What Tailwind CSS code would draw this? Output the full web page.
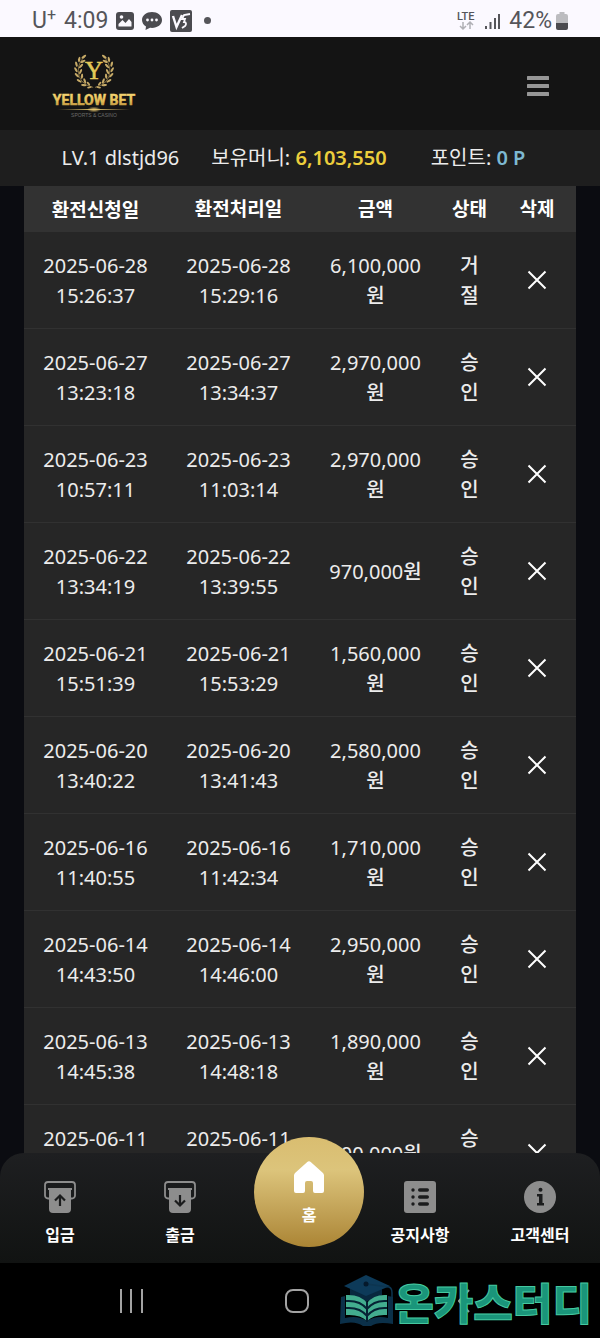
<!DOCTYPE html>
<html lang="ko">
<head>
  <meta charset="UTF-8">
  <meta name="viewport" content="width=device-width, initial-scale=1.0">
  <title>YELLOW BET</title>
  <script src="https://cdn.jsdelivr.net/npm/@tailwindcss/browser@4"></script>
</head>
<body class="h-screen flex flex-col overflow-hidden bg-[#0b0c11] text-[#ececec] font-['Noto_Sans','Noto_Sans_CJK_KR',sans-serif]">

  <!-- 상태 표시줄 -->
  <div class="h-[37px] shrink-0 flex items-center justify-between px-8 pt-1 bg-[#fbf9ff] text-[#55555a] font-['Roboto','Noto_Sans_CJK_KR',sans-serif] text-[23px] leading-8">
    <div class="flex items-center gap-2">
      <span>U<sup class="text-base">+</sup></span>
      <span>4:09</span>
      <svg class="w-[18px] h-[18px]" viewBox="0 0 18 18">
        <rect width="18" height="18" rx="3" fill="#4b4b50"/>
        <path d="M2.500 14.500V12l4-4 3 3 3.500-4 2.500 3v4.500z" fill="#fbf9ff"/>
        <circle cx="5.500" cy="5" r="1.800" fill="#fbf9ff"/>
      </svg>
      <svg class="w-5 h-5" viewBox="0 0 20 20">
        <path d="M10 1C4.500 1 0 4.500 0 9c0 2.500 1.500 5 4 6.500L3.500 19l4.500-2.200c6.500.9 12-2.800 12-7.800 0-4.500-4.500-8-10-8z" fill="#4b4b50"/>
        <circle cx="5.500" cy="9" r="1.400" fill="#fbf9ff"/><circle cx="10" cy="9" r="1.400" fill="#fbf9ff"/><circle cx="14.500" cy="9" r="1.400" fill="#fbf9ff"/>
      </svg>
      <svg class="w-[22px] h-[22px]" viewBox="0 0 22 22">
        <rect width="22" height="22" rx="2" fill="#4b4b50"/>
        <path d="M3 6l3.500 11L12 5" fill="none" stroke="#fbf9ff" stroke-width="2.400"/>
        <path d="M20 4l-6 1-2 4h3l-1 3c2.500 0 2.500 2.500 1 4l-3 2" fill="none" stroke="#fbf9ff" stroke-width="1.800"/>
      </svg>
      <span class="ml-1 w-[7px] h-[7px] rounded-full bg-[#55555a]"></span>
    </div>
    <div class="flex items-center gap-1">
      <svg class="w-5 h-5" viewBox="0 0 20 20">
        <text x="0" y="9" font-size="11" font-weight="500" fill="#55555a">LTE</text>
        <path d="M6 11v7M3 15l3 3 3-3M13 18v-7M10 14l3-3 3 3" fill="none" stroke="#b0b0b5" stroke-width="1.500"/>
      </svg>
      <svg class="w-4 h-4 ml-1" viewBox="0 0 16 16" fill="#55555a">
        <rect x="0" y="13" width="2" height="3"/><rect x="4.500" y="9" width="2" height="7"/><rect x="9" y="5" width="2" height="11"/><rect x="13" y="1" width="2" height="15"/>
      </svg>
      <span class="ml-1">42%</span>
      <svg class="w-3 h-[18px]" viewBox="0 0 12 18">
        <path d="M3.500 0h5v2H10q2 0 2 2v7H0V4q0-2 2-2h1.500z" fill="#bcbcc0"/>
        <path d="M0 11h12v5q0 2-2 2H2q-2 0-2-2z" fill="#4b4b50"/>
      </svg>
    </div>
  </div>

  <!-- 헤더 -->
  <header class="h-[93px] shrink-0 flex items-center justify-between pl-[52px] pr-[35px] pt-1 bg-[#141414]">
    <a href="/" aria-label="YELLOW BET">
      <svg class="w-[84px] h-[68px]" viewBox="0 0 84 68">
        <defs>
          <linearGradient id="gold" x1="0" y1="0" x2="0" y2="1">
            <stop offset="0" stop-color="#f6d878"/><stop offset="0.500" stop-color="#e9c35c"/><stop offset="1" stop-color="#b58a38"/>
          </linearGradient>
          <radialGradient id="glow"><stop offset="0" stop-color="#e8c870"/><stop offset="1" stop-color="#e8c870" stop-opacity="0"/></radialGradient>
          <g id="laurel" fill="#c6aa67">
            <path d="M41 37Q25 33 25 19 25 10 32 4" fill="none" stroke="#a88f54" stroke-width="0.800"/>
            <ellipse cx="31" cy="4" rx="3" ry="1.200" transform="rotate(-35 31 4)"/>
            <ellipse cx="26" cy="7" rx="3" ry="1.200" transform="rotate(-80 26 7)"/>
            <ellipse cx="30" cy="9" rx="3" ry="1.200" transform="rotate(-25 30 9)"/>
            <ellipse cx="23" cy="12" rx="3" ry="1.200" transform="rotate(75 23 12)"/>
            <ellipse cx="28" cy="14" rx="3" ry="1.200" transform="rotate(-45 28 14)"/>
            <ellipse cx="22.500" cy="18" rx="3" ry="1.200" transform="rotate(60 22.500 18)"/>
            <ellipse cx="27.500" cy="20" rx="3" ry="1.200" transform="rotate(-65 27.500 20)"/>
            <ellipse cx="23.500" cy="24" rx="3" ry="1.200" transform="rotate(45 23.500 24)"/>
            <ellipse cx="29" cy="25" rx="3" ry="1.200" transform="rotate(-85 29 25)"/>
            <ellipse cx="26" cy="30" rx="3" ry="1.200" transform="rotate(30 26 30)"/>
            <ellipse cx="32" cy="30" rx="3" ry="1.200" transform="rotate(70 32 30)"/>
            <ellipse cx="31" cy="34.500" rx="3" ry="1.200" transform="rotate(8 31 34.500)"/>
            <ellipse cx="36" cy="33" rx="2.500" ry="1" transform="rotate(50 36 33)"/>
            <ellipse cx="37" cy="37" rx="2.500" ry="1" transform="rotate(-10 37 37)"/>
          </g>
        </defs>
        <g transform="translate(3 1) scale(0.930)">
          <use href="#laurel"/>
          <use href="#laurel" transform="translate(84 0) scale(-1 1)"/>
        </g>
        <text x="42" y="27" text-anchor="middle" font-family="Liberation Serif, serif" font-size="25" fill="#e3c858" stroke="#e3c858" stroke-width="0.500">Y</text>
        <text x="42" y="53" text-anchor="middle" font-family="Liberation Sans Narrow, Roboto, sans-serif" font-weight="700" font-size="14" fill="url(#gold)" stroke="url(#gold)" stroke-width="0.500">YELLOW BET</text>
        <rect x="6" y="57" width="72" height="1" fill="url(#glow)"/>
        <ellipse cx="42" cy="57.500" rx="7" ry="3" fill="url(#glow)"/>
        <text x="42" y="65" text-anchor="middle" font-family="Liberation Sans, sans-serif" font-size="5" fill="#6b6b6b">SPORTS &amp; CASINO</text>
      </svg>
    </a>
    <button type="button" aria-label="메뉴" class="p-4">
      <svg class="w-[22px] h-5" viewBox="0 0 22 20" fill="#969696">
        <rect width="22" height="4" rx="0.500"/><rect y="8" width="22" height="4" rx="0.500"/><rect y="16" width="22" height="4" rx="0.500"/>
      </svg>
    </button>
  </header>

  <!-- 회원 정보 -->
  <div class="h-14 shrink-0 flex items-center justify-center gap-x-8 bg-[#1e1e1e] pl-[61px] pr-[74px] text-[20px] whitespace-nowrap">
    <span>LV.1 dlstjd96</span>
    <span class="mr-3">보유머니: <b class="font-semibold text-[#ecce3c]">6,103,550</b></span>
    <span>포인트: <b class="font-semibold text-[#7db9d2]">0 P</b></span>
  </div>

  <!-- 환전 내역 -->
  <main class="flex-1 min-h-0 overflow-hidden px-6">
    <table class="w-full table-fixed border-collapse bg-[#262626] text-center text-[20px] leading-[30px]">
      <colgroup>
        <col class="w-[143px]"><col class="w-[143px]"><col class="w-[131px]"><col class="w-[57px]"><col>
      </colgroup>
      <thead class="bg-[#323232] text-[19px] text-white">
        <tr>
          <th class="pt-[9px] pb-[7px]">환전신청일</th>
          <th>환전처리일</th>
          <th>금액</th>
          <th>상태</th>
          <th>삭제</th>
        </tr>
      </thead>
      <tbody id="exchange-list"></tbody>
    </table>
  </main>

  <!-- 하단 메뉴 -->
  <nav class="relative h-[110px] -mt-6 shrink-0 rounded-t-3xl bg-linear-to-b from-[#1e1f21] to-[#111312] text-white text-[16px] leading-6 font-bold">
    <ul class="grid grid-cols-5 h-full">
      <li>
        <a href="/deposit" class="flex flex-col items-center gap-2.5 pt-7">
          <svg class="w-8 h-8" viewBox="0 0 32 32">
            <path d="M5 17.500H4a3 3 0 0 1-3-3V4a3 3 0 0 1 3-3h24a3 3 0 0 1 3 3v10.500a3 3 0 0 1-3 3h-1" fill="none" stroke="#8d8d8d" stroke-width="1.800"/>
            <path d="M4 7h24v2h-1v19a4 4 0 0 1-4 4H9a4 4 0 0 1-4-4V9H4z" fill="#8d8d8d"/>
            <path d="M16 25V15M11 19.500l5-5 5 5" fill="none" stroke="#1b1c1d" stroke-width="2.200"/>
          </svg>
          입금
        </a>
      </li>
      <li>
        <a href="/withdraw" class="flex flex-col items-center gap-2.5 pt-7">
          <svg class="w-8 h-8" viewBox="0 0 32 32">
            <path d="M5 17.500H4a3 3 0 0 1-3-3V4a3 3 0 0 1 3-3h24a3 3 0 0 1 3 3v10.500a3 3 0 0 1-3 3h-1" fill="none" stroke="#8d8d8d" stroke-width="1.800"/>
            <path d="M4 7h24v2h-1v19a4 4 0 0 1-4 4H9a4 4 0 0 1-4-4V9H4z" fill="#8d8d8d"/>
            <path d="M16 14v10M11 19.500l5 5 5-5" fill="none" stroke="#1b1c1d" stroke-width="2.200"/>
          </svg>
          출금
        </a>
      </li>
      <li class="relative">
        <a href="/" class="absolute -top-4 -right-1 w-[110px] h-[110px] rounded-full bg-linear-to-b from-[#d9bd70] via-[#dcc47b] via-30% to-[#ab8534] flex flex-col items-center gap-2.5 pt-6">
          <svg class="w-8 h-8" viewBox="0 0 32 32" fill="#fff">
            <path d="M14 1.200a3 3 0 0 1 4 0L30 12q1 1 1 2.500V30q0 2-2 2h-7q-2 0-2-2v-8q0-2-2-2h-4q-2 0-2 2v8q0 2-2 2H3q-2 0-2-2V14.500Q1 13 2 12z"/>
          </svg>
          홈
        </a>
      </li>
      <li>
        <a href="/notice" class="flex flex-col items-center gap-2.5 pt-7">
          <svg class="w-8 h-8" viewBox="0 0 32 32">
            <rect width="32" height="32" rx="3" fill="#8d8d8d"/>
            <g fill="#1b1c1d">
              <circle cx="9" cy="9" r="1.700"/><circle cx="9" cy="16" r="1.700"/><circle cx="9" cy="23" r="1.700"/>
              <rect x="14" y="7.300" width="11" height="3.400" rx="1.700"/><rect x="14" y="14.300" width="11" height="3.400" rx="1.700"/><rect x="14" y="21.300" width="11" height="3.400" rx="1.700"/>
            </g>
          </svg>
          공지사항
        </a>
      </li>
      <li>
        <a href="/support" class="flex flex-col items-center gap-2.5 pt-7">
          <svg class="w-8 h-8" viewBox="0 0 32 32">
            <circle cx="16" cy="16" r="16" fill="#8d8d8d"/>
            <circle cx="16.500" cy="8.800" r="2" fill="#1b1c1d"/>
            <path d="M13 13h5.500v9H20v2.500h-7V22h2v-6.500h-2z" fill="#1b1c1d"/>
          </svg>
          고객센터
        </a>
      </li>
    </ul>
  </nav>

  <!-- 시스템 내비게이션 -->
  <div class="relative h-[75px] shrink-0 grid grid-cols-[20%_59%_1fr] bg-black">
    <button type="button" aria-label="최근 앱" class="flex items-center justify-end">
      <svg class="w-6 h-6 -mr-6" viewBox="0 0 24 24" stroke="#a3a3a3" stroke-width="2"><path d="M1 0v24M11 0v24M22 0v24"/></svg>
    </button>
    <button type="button" aria-label="홈" class="flex items-center justify-center">
      <svg class="w-6 h-6" viewBox="0 0 24 24" fill="none" stroke="#a3a3a3" stroke-width="2"><rect x="1" y="1" width="22" height="22" rx="7"/></svg>
    </button>
    <button type="button" aria-label="뒤로" class="flex items-center">
      <svg class="w-3 h-6 -ml-4" viewBox="0 0 12 24" fill="none" stroke="#8f9c99" stroke-width="2"><path d="M11 1L1 12l10 11"/></svg>
    </button>

    <!-- 워터마크 -->
    <div class="absolute right-2 inset-y-0 flex items-center">
      <svg class="w-[54px] h-[52px]" viewBox="0 0 54 52">
        <path d="M10 12v8l16 7 16-7v-8z" fill="#08283f"/>
        <path d="M4 11L26 0l24 11-24 10z" fill="#0d3a59"/>
        <path d="M26 9l23 3q3 1 3 6v4" fill="none" stroke="#0d3550" stroke-width="1.500"/>
        <circle cx="26" cy="9" r="2.500" fill="#05192b"/>
        <path d="M1 22l4-1v22q13-3 22 3 9-6 21-3V21l5 1v27q-15-3-22 2h-8Q15 45 0 49z" fill="#0b3049"/>
        <path d="M6 20q14-1 21 8 7-9 20-8v20q-13-1-20 6-7-7-21-6z" fill="#43ad8f"/>
        <path d="M6 26q14-1 21 8 7-9 20-8M6 33q14-1 21 8 7-9 20-8M27 27v20" fill="none" stroke="#062334" stroke-width="2"/>
      </svg>
      <span class="font-['Noto_Sans_CJK_KR',sans-serif] font-black text-[43px] leading-[52px] text-[#1a957a] [-webkit-text-stroke:1px_#45c9a0]">온카스터디</span>
    </div>
  </div>

  <script>
    // 환전 신청 목록
    const exchanges = [
      ['2025-06-28 15:26:37', '2025-06-28 15:29:16', '6,100,000', '거절'],
      ['2025-06-27 13:23:18', '2025-06-27 13:34:37', '2,970,000', '승인'],
      ['2025-06-23 10:57:11', '2025-06-23 11:03:14', '2,970,000', '승인'],
      ['2025-06-22 13:34:19', '2025-06-22 13:39:55', '970,000', '승인'],
      ['2025-06-21 15:51:39', '2025-06-21 15:53:29', '1,560,000', '승인'],
      ['2025-06-20 13:40:22', '2025-06-20 13:41:43', '2,580,000', '승인'],
      ['2025-06-16 11:40:55', '2025-06-16 11:42:34', '1,710,000', '승인'],
      ['2025-06-14 14:43:50', '2025-06-14 14:46:00', '2,950,000', '승인'],
      ['2025-06-13 14:45:38', '2025-06-13 14:48:18', '1,890,000', '승인'],
      ['2025-06-11 14:20:10', '2025-06-11 14:25:32', '500,000', '승인'],
    ];

    document.getElementById('exchange-list').innerHTML = exchanges.map(([requested, processed, amount, status]) => `
      <tr class="border-b border-[#313131]">
        <td class="px-4 pt-[19px] pb-[17px]">${requested}</td>
        <td class="px-4 pt-[19px] pb-[17px]">${processed}</td>
        <td class="px-4 pt-[19px] pb-[17px]">${amount}<span class="font-medium">원</span></td>
        <td class="px-4 pt-[19px] pb-[17px] font-medium">${status}</td>
        <td>
          <button type="button" aria-label="삭제" class="block mx-auto">
            <svg class="w-5 h-5" viewBox="0 0 20 20" stroke="#fff" stroke-width="2"><path d="M1.500 1.500l17 17M18.500 1.500l-17 17"/></svg>
          </button>
        </td>
      </tr>`).join('');
  </script>
</body>
</html>
